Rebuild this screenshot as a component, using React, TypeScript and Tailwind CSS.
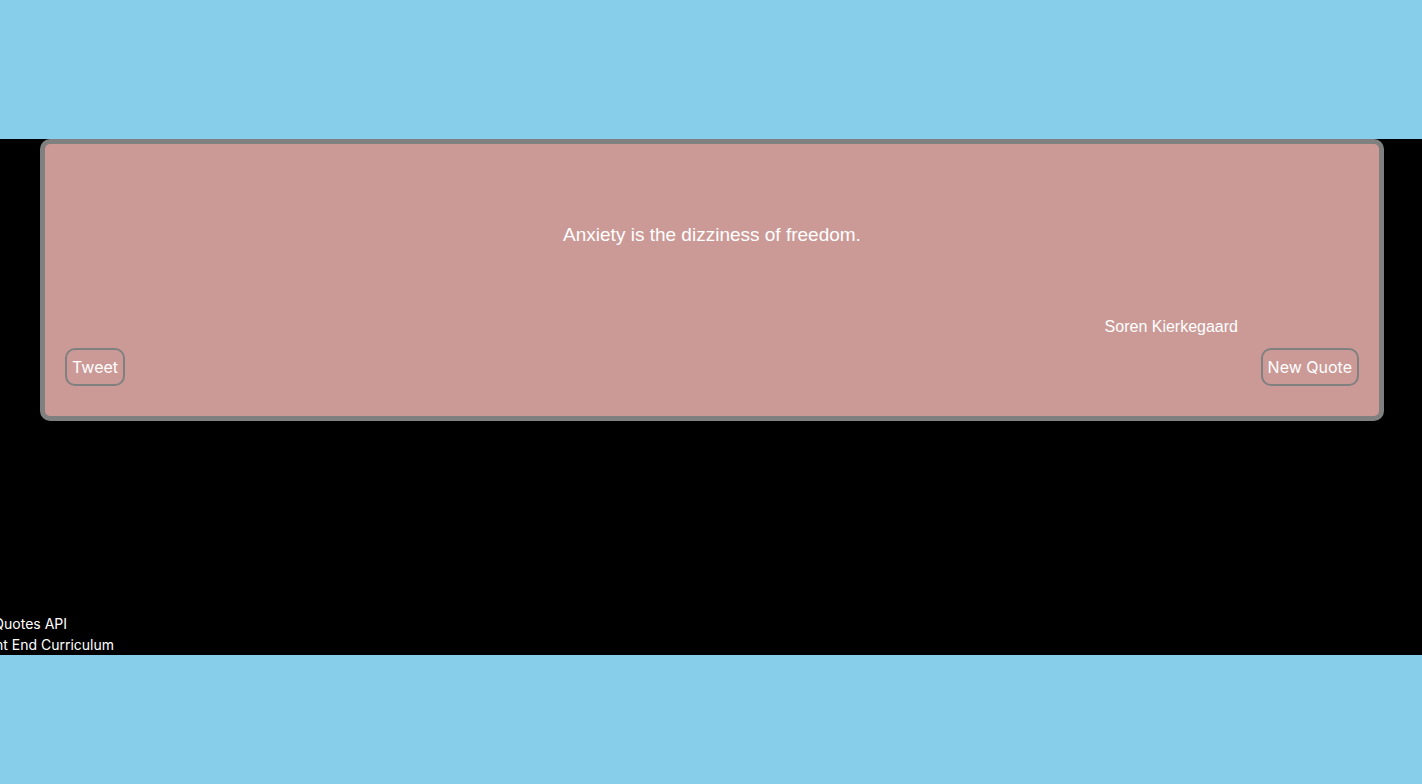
import { useState } from "react";

type Quote = { text: string; author: string };

const quotes: Quote[] = [
  { text: "Anxiety is the dizziness of freedom.", author: "Soren Kierkegaard" },
];

const buttonClass =
  "cursor-pointer rounded-[10px] border-2 border-[#808080] p-[5px] font-['Inter',sans-serif] text-base leading-6 text-white";

const credits = [
  { label: "Quotes API", width: "w-[67px]" },
  { label: "Front End Curriculum", width: "w-[114px]" },
];

export default function App() {
  const [index, setIndex] = useState(0);
  const quote = quotes[index];

  return (
    <div className="flex min-h-screen flex-col bg-[#87ceeb] pt-[139px] pb-[129px]">
      <div className="flex flex-1 flex-col justify-between bg-black text-white">
        <main className="mr-[38px] ml-10 rounded-[10px] border-5 border-[#808080] bg-[#cb9a97] px-5 pb-[30px] font-['Liberation_Sans',Arial,sans-serif]">
          <p className="pt-[77px] text-center text-[19px] leading-7">{quote.text}</p>
          <p className="mt-[66px] pr-[121px] text-right text-base leading-6">{quote.author}</p>
          <div className="mt-[9px] flex justify-between">
            <button type="button" className={buttonClass}>
              Tweet
            </button>
            <button
              type="button"
              className={buttonClass}
              onClick={() => setIndex((index + 1) % quotes.length)}
            >
              New Quote
            </button>
          </div>
        </main>
        <footer className="overflow-hidden font-['Inter',sans-serif] text-sm leading-[21px]">
          {credits.map((credit) => (
            <div key={credit.label} className={`flex justify-end whitespace-nowrap ${credit.width}`}>
              <a href="#" className="shrink-0">
                {credit.label}
              </a>
            </div>
          ))}
        </footer>
      </div>
    </div>
  );
}
